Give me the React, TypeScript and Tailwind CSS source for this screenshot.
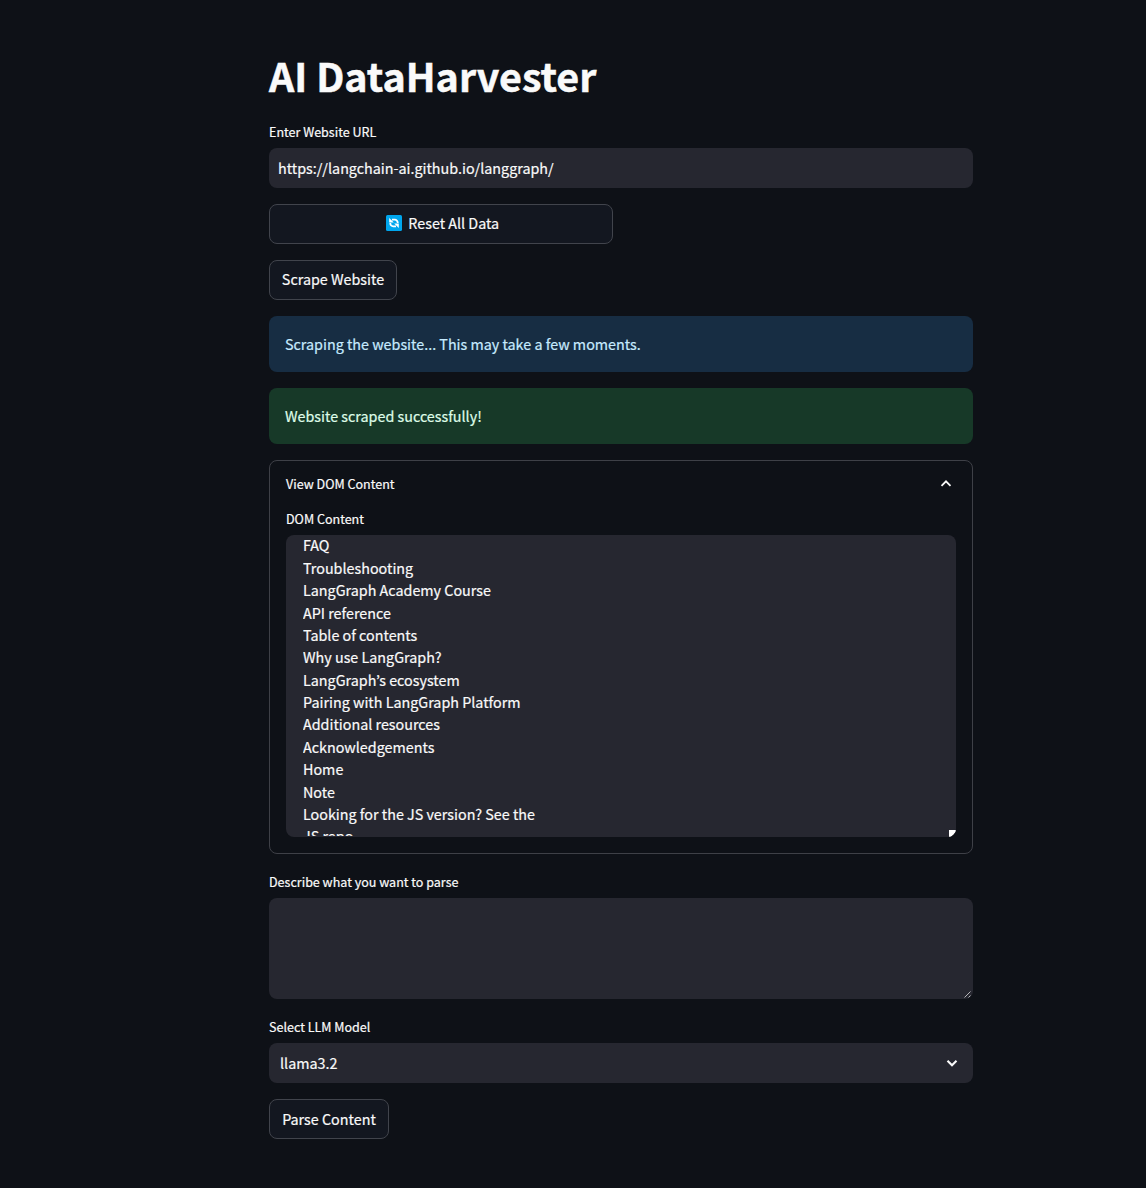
import type { ReactNode } from "react";

const domLines = [
  "FAQ",
  "Troubleshooting",
  "LangGraph Academy Course",
  "API reference",
  "Table of contents",
  "Why use LangGraph?",
  "LangGraph’s ecosystem",
  "Pairing with LangGraph Platform",
  "Additional resources",
  "Acknowledgements",
  "Home",
  "Note",
  "Looking for the JS version? See the",
  "JS repo",
];

function Label({ children }: { children: ReactNode }) {
  return <div className="h-6 text-[12.54px] leading-5">{children}</div>;
}

function Button({ children, className = "" }: { children: ReactNode; className?: string }) {
  return (
    <button
      className={`flex h-10 items-center justify-center rounded-lg border border-[#41444c] bg-[#131720] whitespace-nowrap ${className}`}
    >
      {children}
    </button>
  );
}

function RefreshIcon() {
  return (
    <svg className="mr-[6.5px] h-4 w-4" viewBox="0 0 16 16" fill="none">
      <rect width="16" height="16" rx="1.5" fill="#00a6ed" />
      <path
        d="M6 4.7h2.8a2.9 2.9 0 0 1 2.9 2.9v.5M10 11.3H7.2a2.9 2.9 0 0 1-2.9-2.9v-.5"
        stroke="#fff"
        strokeWidth="1.8"
      />
      <path d="M3.2 3v4.6h4.6zM12.8 13V8.4H8.2z" fill="#fff" />
    </svg>
  );
}

export default function App() {
  return (
    <main className="h-[1188px] overflow-hidden bg-[#0e1117] pl-[269px] font-['Noto_Sans_CJK_KR',sans-serif] text-[14.33px] text-[#fafafa] [-webkit-text-stroke:0.2px]">
      <div className="w-[704px]">
        <h1 className="h-[122px] pt-12 text-[39.4px] leading-[53px] font-bold [-webkit-text-stroke:0.5px]">
          AI DataHarvester
        </h1>
        <Label>Enter Website URL</Label>
        <div className="mt-0.5 flex h-10 items-center rounded-lg bg-[#262730] px-[9px]">
          https://langchain-ai.github.io/langgraph/
        </div>
        <Button className="mt-4 w-[344px] pb-[2px] pl-[3px]">
          <RefreshIcon />
          Reset All Data
        </Button>
        <Button className="mt-4 w-32 pb-[2px]">Scrape Website</Button>
        <div className="mt-4 flex h-14 items-center rounded-lg bg-[#172d43] px-4 text-[#c7ebff]">
          Scraping the website... This may take a few moments.
        </div>
        <div className="mt-4 flex h-14 items-center rounded-lg bg-[#173928] px-4 text-[#dffde9]">
          Website scraped successfully!
        </div>
        <section className="mt-4 h-[394px] rounded-lg border border-[#3e4047] px-4">
          <div className="flex h-12 items-center justify-between pb-[2px] text-[12.54px]">
            View DOM Content
            <svg className="mr-0.5 h-4 w-4" viewBox="0 0 16 16" fill="none" stroke="#fafafa" strokeWidth="1.8">
              <path d="M3.5 9.8 8 5.3l4.5 4.5" />
            </svg>
          </div>
          <Label>DOM Content</Label>
          <div className="relative mt-0.5 h-[302px] overflow-hidden rounded-lg bg-[#262730] px-[17px]">
            <div className="-mt-[0.64px] h-[301.6px] overflow-hidden">
              {domLines.map((line) => (
                <div key={line} className="h-[22.39px] leading-[22.4px]">
                  {line}
                </div>
              ))}
            </div>
            <svg className="absolute right-0 bottom-0 h-[7px] w-[7px]" viewBox="0 0 7 7">
              <path d="M0 0h7v2L2 7H0z" fill="#fff" />
            </svg>
          </div>
        </section>
        <div className="mt-[18px]">
          <Label>Describe what you want to parse</Label>
        </div>
        <div className="relative mt-0.5 h-[101px] rounded-lg bg-[#262730]">
          <svg className="absolute right-px bottom-px h-2 w-2" viewBox="0 0 8 8" stroke="#b5b5b8" fill="none">
            <path d="M.5 7.5l6-6M4.5 7.5l2-2" />
          </svg>
        </div>
        <div className="mt-[18px]">
          <Label>Select LLM Model</Label>
        </div>
        <div className="mt-0.5 flex h-10 items-center justify-between rounded-lg bg-[#262730] pr-3 pl-[11px]">
          llama3.2
          <svg className="h-[18px] w-[18px]" viewBox="0 0 18 18" fill="none" stroke="#fafafa" strokeWidth="2.1">
            <path d="M4.5 6.7 9 11.2l4.5-4.5" />
          </svg>
        </div>
        <Button className="mt-4 w-[120px] pb-px">Parse Content</Button>
      </div>
    </main>
  );
}
